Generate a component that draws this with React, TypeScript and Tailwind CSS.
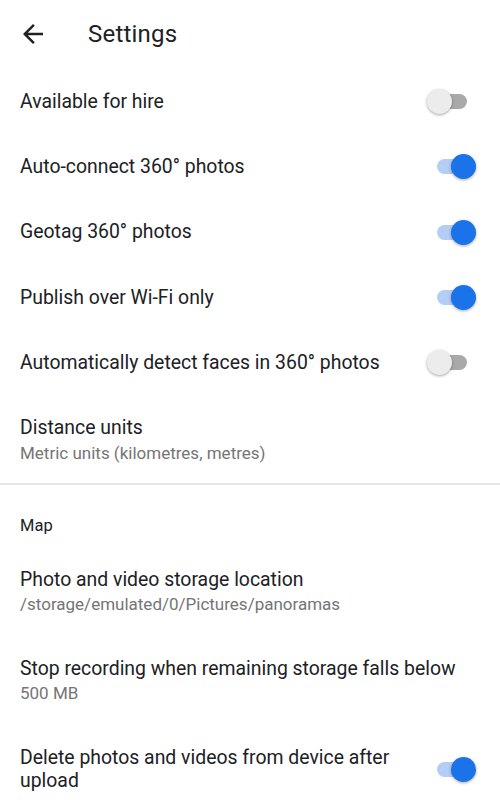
import { useState } from 'react'

type Item = {
  title: string
  subtitle?: string
  toggle?: boolean
}

const topItems: Item[] = [
  { title: 'Available for hire', toggle: false },
  { title: 'Auto-connect 360° photos', toggle: true },
  { title: 'Geotag 360° photos', toggle: true },
  { title: 'Publish over Wi-Fi only', toggle: true },
  { title: 'Automatically detect faces in 360° photos', toggle: false },
]

function Switch({ on, onChange }: { on: boolean; onChange: () => void }) {
  return (
    <button onClick={onChange} className="relative w-[49px] h-[25px] shrink-0" aria-pressed={on}>
      <span
        className={`absolute left-[10px] top-[5px] w-[30px] h-[15px] rounded-full ${
          on ? 'bg-[#b4cdf7]' : 'bg-[#a9a9a9]'
        }`}
      />
      <span
        className={`absolute top-0 w-[25px] h-[25px] rounded-full shadow-[0_1px_3px_rgba(0,0,0,0.35)] ${
          on ? 'left-[24px] bg-[#1a73e8]' : 'left-0 bg-[#ececec]'
        }`}
      />
    </button>
  )
}

export default function App() {
  const [toggles, setToggles] = useState<boolean[]>(topItems.map(i => !!i.toggle))
  const [deleteAfter, setDeleteAfter] = useState(true)

  return (
    <div className="w-[500px] h-[804px] overflow-hidden bg-white text-[#202124] font-['Roboto',sans-serif]">
      {/* Header */}
      <div className="h-[68px] flex items-center">
        <svg viewBox="0 0 24 24" className="w-[30px] h-[30px] ml-[18px] fill-[#202124]">
          <path d="M20 11H7.83l5.59-5.59L12 4l-8 8 8 8 1.41-1.41L7.83 13H20v-2z" />
        </svg>
        <h1 className="ml-[40px] text-[24px] leading-[30px] tracking-[0.2px] text-[#202124]">Settings</h1>
      </div>

      {/* Toggle rows */}
      <div className="pt-[1px]">
        {topItems.map((item, i) => (
          <div key={item.title} className="h-[65.3px] flex items-center justify-between pl-[20px] pr-[24px]">
            <span className="text-[19.4px] leading-[24px]">{item.title}</span>
            <Switch
              on={toggles[i]}
              onChange={() => setToggles(t => t.map((v, j) => (j === i ? !v : v)))}
            />
          </div>
        ))}
      </div>

      <div className="h-[88px] pt-[21px] px-[20px]">
        <div className="text-[19.4px] leading-[24px]">Distance units</div>
        <div className="mt-[2px] text-[17px] leading-[22px] text-[#757575]">Metric units (kilometres, metres)</div>
      </div>

      <div className="h-[2px] bg-[#e6e6e6]" />

      <div className="pt-[31px] pb-[10px] px-[20px] text-[16.5px] leading-[20px]">Map</div>

      <div className="h-[89px] pt-[22px] px-[20px]">
        <div className="text-[19.4px] leading-[24px]">Photo and video storage location</div>
        <div className="mt-[1px] text-[17px] leading-[22px] text-[#757575]">/storage/emulated/0/Pictures/panoramas</div>
      </div>

      <div className="h-[89px] pt-[22px] px-[20px]">
        <div className="text-[19.4px] leading-[24px]">Stop recording when remaining storage falls below</div>
        <div className="mt-[1px] text-[17px] leading-[22px] text-[#757575]">500 MB</div>
      </div>

      <div className="flex items-center justify-between pt-[22px] pl-[20px] pr-[24px]">
        <span className="text-[19.4px] leading-[23px] max-w-[400px]">
          Delete photos and videos from device after upload
        </span>
        <Switch on={deleteAfter} onChange={() => setDeleteAfter(v => !v)} />
      </div>
    </div>
  )
}
